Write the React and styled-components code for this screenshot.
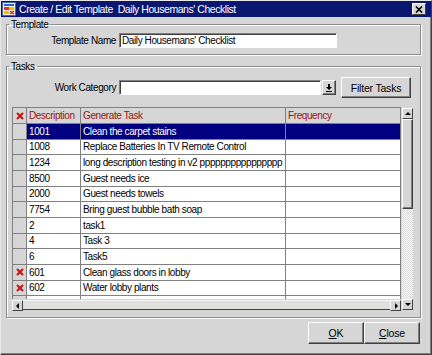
import React from 'react';
import styled, { createGlobalStyle } from 'styled-components';

const GlobalStyle = createGlobalStyle`
  html, body { margin: 0; padding: 0; background: #d6d6d6; }
  body {
    font-family: "Liberation Sans", Arial, sans-serif;
    font-size: 10px;
    letter-spacing: -0.4px;
    color: #000;
  }
  * { box-sizing: border-box; }
`;

const Window = styled.div`
  width: 432px;
  height: 355px;
  background: #d6d6d6;
  border: 1px solid;
  border-color: #e8e8e8 #404040 #404040 #e8e8e8;
  box-shadow: inset -1px -1px #808080;
  display: flex;
  flex-direction: column;
`;

const TitleBar = styled.div`
  height: 16px;
  flex: none;
  display: flex;
  align-items: center;
  gap: 3px;
  padding: 0 5px 0 1px;
  background: #0a1670;
  color: #fff;
  font-size: 10.5px;
  letter-spacing: -0.45px;
`;

const TitleText = styled.div`
  flex: 1;
  white-space: nowrap;
`;

const CloseBox = styled.div`
  width: 14px;
  height: 12px;
  background: #d6d6d6;
  border: 1px solid;
  border-color: #fff #404040 #404040 #fff;
  display: flex;
  align-items: center;
  justify-content: center;
`;

const Body = styled.div`
  flex: 1;
  display: flex;
  flex-direction: column;
  padding: 2px 10px 0 5px;
`;

const Group = styled.fieldset`
  margin: ${p => p.$top}px 0 0 0;
  padding: ${p => p.$pad};
  border: 1px solid #8c8c8c;
  box-shadow: 1px 1px 0 #fff, inset 1px 1px 0 #fff;
  min-width: 0;
`;

const Legend = styled.legend`
  margin-left: 2px;
  padding: 0 2px;
  line-height: 11px;
`;

const FieldRow = styled.div`
  display: flex;
  align-items: center;
  height: ${p => p.$h}px;
`;

const Label = styled.div`
  width: ${p => p.$w}px;
  text-align: right;
  padding-right: 3px;
  white-space: nowrap;
`;

const TextInput = styled.div`
  width: ${p => p.$w}px;
  height: 15px;
  background: #fff;
  border: 1px solid;
  border-color: #808080 #fff #fff #808080;
  box-shadow: inset 1px 1px #404040;
  padding: 1px 0 0 2px;
  line-height: 12px;
  white-space: nowrap;
  overflow: hidden;
`;

const LovButton = styled.div`
  width: 14px;
  height: 15px;
  margin-left: 1px;
  background: #d6d6d6;
  border: 1px solid;
  border-color: #fff #404040 #404040 #fff;
  box-shadow: inset -1px -1px #808080;
  display: flex;
  align-items: center;
  justify-content: center;
`;

const Button = styled.div`
  width: ${p => p.$w}px;
  height: ${p => p.$h}px;
  margin-left: ${p => p.$ml || 0}px;
  background: #d6d6d6;
  border: 1px solid;
  border-color: #fff #404040 #404040 #fff;
  box-shadow: inset -1px -1px #808080;
  display: flex;
  align-items: center;
  justify-content: center;
  font-size: 10.5px;
  letter-spacing: -0.2px;
  u { text-decoration: underline; text-underline-offset: 1px; }
`;

const TableArea = styled.div`
  margin: 9px 0 0 5px;
  display: grid;
  grid-template-columns: 389px 13px;
  grid-template-rows: 192px 11px;
`;

const Viewport = styled.div`
  overflow: hidden;
  border-top: 1px solid #808080;
  border-left: 1px solid #808080;
`;

const Row = styled.div`
  display: grid;
  grid-template-columns: 14px 54px 205px 115px;
  height: ${p => p.$h}px;
`;

const Cell = styled.div`
  border-right: 1px solid #808080;
  border-bottom: 1px solid #808080;
  padding: 0 0 0 2px;
  display: flex;
  align-items: center;
  white-space: nowrap;
  overflow: hidden;
  background: ${p => (p.$selected ? '#000080' : p.$head ? '#d6d6d6' : '#fff')};
  color: ${p => (p.$selected ? '#fff' : p.$head ? '#9a1414' : '#000')};
`;

const MarkCell = styled.div`
  border-right: 1px solid #808080;
  border-bottom: 1px solid #808080;
  background: #d6d6d6;
  display: flex;
  align-items: center;
  justify-content: center;
`;

const VScroll = styled.div`
  grid-row: 1 / 3;
  grid-column: 2;
  display: flex;
  flex-direction: column;
  padding: 1px 0 0 1px;
`;

const ScrollBtn = styled.div`
  width: 11px;
  height: 11px;
  flex: none;
  background: #d6d6d6;
  border: 1px solid;
  border-color: #fff #404040 #404040 #fff;
  display: flex;
  align-items: center;
  justify-content: center;
`;

const Thumb = styled.div`
  width: 11px;
  height: ${p => p.$h}px;
  flex: none;
  background: #d6d6d6;
  border: 1px solid;
  border-color: #fff #404040 #404040 #fff;
  box-shadow: inset -1px -1px #808080;
`;

const Track = styled.div`
  width: 11px;
  flex: 1;
  background: repeating-conic-gradient(#d6d6d6 0 25%, #fff 0 50%) 0 0 / 2px 2px;
`;

const HScroll = styled.div`
  grid-row: 2;
  grid-column: 1;
  display: flex;
  padding-top: 1px;
`;

const HThumb = styled.div`
  flex: 1;
  height: 10px;
  background: #e2e0dc;
  border-bottom: 1px solid #404040;
  border-top: 1px solid #f4f4f4;
`;

const Footer = styled.div`
  display: flex;
  justify-content: flex-end;
  margin-top: 4px;
  padding-right: 1px;
`;

const Arrow = ({ dir }) => {
  const pts = {
    up: '1,5 4,2 7,5',
    down: '1,2 4,5 7,2',
    left: '5,1 2,4 5,7',
    right: '3,1 6,4 3,7',
  }[dir];
  return (
    <svg width="8" height="8" viewBox="0 0 8 8">
      <polygon points={pts} fill="#000" />
    </svg>
  );
};

const RedX = () => (
  <svg width="8" height="8" viewBox="0 0 8 8">
    <path d="M1 1 L7 7 M7 1 L1 7" stroke="#c81010" strokeWidth="2" />
  </svg>
);

const LovIcon = () => (
  <svg width="8" height="9" viewBox="0 0 8 9">
    <path d="M3 1h2v3h2L4 7 1 4h2z" fill="#000" />
    <rect x="1" y="8" width="6" height="1" fill="#000" />
  </svg>
);

const FormIcon = () => (
  <svg width="14" height="14" viewBox="0 0 14 14">
    <rect x="0.5" y="0.5" width="13" height="13" fill="#f4f0e0" stroke="#4060b0" />
    <rect x="2" y="2" width="10" height="2" fill="#3060e0" />
    <rect x="2" y="5" width="5" height="3" fill="#e03030" />
    <rect x="7" y="5" width="5" height="3" fill="#f0c000" />
    <rect x="2" y="9" width="5" height="3" fill="#f0c000" />
    <path d="M8 9l4 3M8 12l4-3" stroke="#c02020" strokeWidth="1.2" />
  </svg>
);

const tasks = [
  { code: '1001', text: 'Clean the carpet stains', selected: true },
  { code: '1008', text: 'Replace Batteries In TV Remote Control' },
  { code: '1234', text: 'long description testing in v2 pppppppppppppppp' },
  { code: '8500', text: 'Guest needs ice' },
  { code: '2000', text: 'Guest needs towels' },
  { code: '7754', text: 'Bring guest bubble bath soap' },
  { code: '2', text: 'task1' },
  { code: '4', text: 'Task 3' },
  { code: '6', text: 'Task5' },
  { code: '601', text: 'Clean glass doors in lobby', marked: true },
  { code: '602', text: 'Water lobby plants', marked: true },
  { code: '', text: '' },
];

function App() {
  return (
    <>
      <GlobalStyle />
      <Window>
        <TitleBar>
          <FormIcon />
          <TitleText>Create / Edit Template&nbsp; Daily Housemans' Checklist</TitleText>
          <CloseBox>
            <svg width="8" height="7" viewBox="0 0 8 7">
              <path d="M1 0.5 L7 6.5 M7 0.5 L1 6.5" stroke="#000" strokeWidth="1.6" />
            </svg>
          </CloseBox>
        </TitleBar>
        <Body>
          <Group $top={0} $pad="3px 0 6px 0">
            <Legend>Template</Legend>
            <FieldRow $h={15}>
              <Label $w={112}>Template Name</Label>
              <TextInput $w={218}>Daily Housemans' Checklist</TextInput>
            </FieldRow>
          </Group>
          <Group $top={6} $pad="5px 0 7px 0">
            <Legend>Tasks</Legend>
            <FieldRow $h={21}>
              <Label $w={112}>Work Category</Label>
              <TextInput $w={202} />
              <LovButton>
                <LovIcon />
              </LovButton>
              <Button $w={70} $h={21} $ml={5}>Filter Tasks</Button>
            </FieldRow>
            <TableArea>
              <Viewport>
                <Row $h={16}>
                  <MarkCell>
                    <RedX />
                  </MarkCell>
                  <Cell $head>Description</Cell>
                  <Cell $head>Generate Task</Cell>
                  <Cell $head>Frequency</Cell>
                </Row>
                {tasks.map((t, i) => (
                  <Row key={i} $h={15.66}>
                    <MarkCell>{t.marked && <RedX />}</MarkCell>
                    <Cell $selected={t.selected}>{t.code}</Cell>
                    <Cell $selected={t.selected}>{t.text}</Cell>
                    <Cell $selected={t.selected} />
                  </Row>
                ))}
              </Viewport>
              <VScroll>
                <ScrollBtn>
                  <Arrow dir="up" />
                </ScrollBtn>
                <Thumb $h={90} />
                <Track />
                <ScrollBtn>
                  <Arrow dir="down" />
                </ScrollBtn>
              </VScroll>
              <HScroll>
                <ScrollBtn>
                  <Arrow dir="left" />
                </ScrollBtn>
                <HThumb />
                <ScrollBtn>
                  <Arrow dir="right" />
                </ScrollBtn>
              </HScroll>
            </TableArea>
          </Group>
          <Footer>
            <Button $w={56} $h={22}>
              <span><u>O</u>K</span>
            </Button>
            <Button $w={56} $h={22}>
              <span><u>C</u>lose</span>
            </Button>
          </Footer>
        </Body>
      </Window>
    </>
  );
}

export default App;
